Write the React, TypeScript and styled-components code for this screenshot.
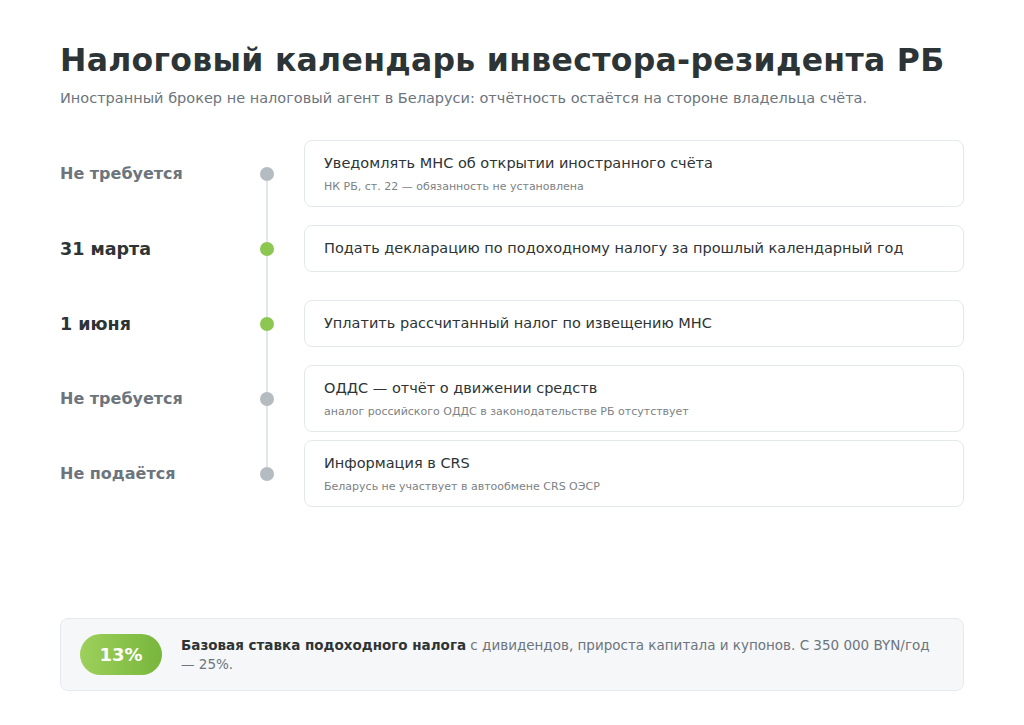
import React from "react";
import styled, { createGlobalStyle } from "styled-components";

const Global = createGlobalStyle`
  html, body { margin: 0; background: #fff; }
  body { font-family: "DejaVu Sans", "Noto Sans", sans-serif; color: #2d3436; }
`;

const Page = styled.div`
  width: 1024px; height: 725px; box-sizing: border-box;
  padding: 40px 60px 0 60px; display: flex; flex-direction: column;
`;
const Title = styled.h1`
  margin: 0; font-size: 31.5px; font-weight: 700; letter-spacing: 0.3px; color: #2d3436; line-height: 40px;
`;
const Subtitle = styled.p`
  margin: 8px 0 0; font-size: 14.5px; color: #6c757d; line-height: 20px;
`;
const Timeline = styled.div`
  position: relative; margin-top: 28px; display: flex; flex-direction: column;
`;
const Line = styled.div`
  position: absolute; left: 206px; width: 2px; top: 37px; bottom: 37px; background: #e1e6ea;
`;
const Row = styled.div`
  display: grid; grid-template-columns: 170px 14px 1fr; column-gap: 30px;
  align-items: center; height: 75px; position: relative;
`;
const Label = styled.div<{ $active: boolean }>`
  font-size: ${p => (p.$active ? "17.5px" : "16px")}; font-weight: 700;
  color: ${p => (p.$active ? "#2d3436" : "#6c757d")};
`;
const Dot = styled.div<{ $active: boolean }>`
  width: 14px; height: 14px; border-radius: 50%; position: relative; z-index: 1;
  background: ${p => (p.$active ? "#8cc751" : "#b4bcc2")};
`;
const Card = styled.div`
  border: 1px solid #e3e8ec; border-radius: 8px; padding: 12px 19px; background: #fff;
  display: flex; flex-direction: column; gap: 6px; min-height: 21px; justify-content: center;
`;
const CardTitle = styled.div`font-size: 14.5px; color: #2d3436; line-height: 21px;`;
const CardSub = styled.div`font-size: 11px; color: #7b8285; line-height: 14px;`;
const Spacer = styled.div`flex: 1;`;
const Note = styled.div`
  margin-bottom: 34px; border: 1px solid #e6eaee; background: #f6f7f9; border-radius: 8px;
  padding: 15px 19px; display: flex; align-items: center; gap: 19px;
`;
const Pill = styled.div`
  flex: none; width: 82px; height: 41px; border-radius: 21px;
  background: linear-gradient(90deg, #9dd05c, #78b63c); color: #fff;
  font-size: 18px; font-weight: 700; display: flex; align-items: center; justify-content: center;
`;
const NoteText = styled.div`font-size: 13.5px; line-height: 19px; color: #6c757d; b { color: #2d3436; }`;

const rows = [
  { l: "Не требуется", a: false, t: "Уведомлять МНС об открытии иностранного счёта", s: "НК РБ, ст. 22 — обязанность не установлена" },
  { l: "31 марта", a: true, t: "Подать декларацию по подоходному налогу за прошлый календарный год" },
  { l: "1 июня", a: true, t: "Уплатить рассчитанный налог по извещению МНС" },
  { l: "Не требуется", a: false, t: "ОДДС — отчёт о движении средств", s: "аналог российского ОДДС в законодательстве РБ отсутствует" },
  { l: "Не подаётся", a: false, t: "Информация в CRS", s: "Беларусь не участвует в автообмене CRS ОЭСР" },
];

export default function App() {
  return (
    <Page>
      <Global />
      <Title>Налоговый календарь инвестора-резидента РБ</Title>
      <Subtitle>Иностранный брокер не налоговый агент в Беларуси: отчётность остаётся на стороне владельца счёта.</Subtitle>
      <Timeline>
        <Line />
        {rows.map((r, i) => (
          <Row key={i}>
            <Label $active={r.a}>{r.l}</Label>
            <Dot $active={r.a} />
            <Card>
              <CardTitle>{r.t}</CardTitle>
              {r.s && <CardSub>{r.s}</CardSub>}
            </Card>
          </Row>
        ))}
      </Timeline>
      <Spacer />
      <Note>
        <Pill>13%</Pill>
        <NoteText><b>Базовая ставка подоходного налога</b> с дивидендов, прироста капитала и купонов. С 350 000 BYN/год — 25%.</NoteText>
      </Note>
    </Page>
  );
}
